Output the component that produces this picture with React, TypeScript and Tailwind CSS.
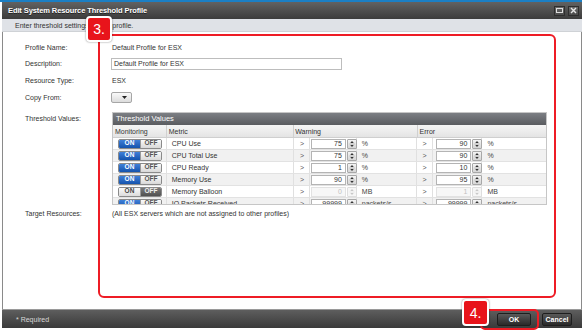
import React from "react";

type Row = {
  metric: string;
  on: boolean;
  w: string;
  e: string;
  unit: string;
};

const rows: Row[] = [
  { metric: "CPU Use", on: true, w: "75", e: "90", unit: "%" },
  { metric: "CPU Total Use", on: true, w: "75", e: "90", unit: "%" },
  { metric: "CPU Ready", on: true, w: "1", e: "10", unit: "%" },
  { metric: "Memory Use", on: true, w: "90", e: "95", unit: "%" },
  { metric: "Memory Balloon", on: false, w: "0", e: "1", unit: "MB" },
  { metric: "IO Packets Received", on: true, w: "99999", e: "99999", unit: "packets/s" },
];

function Spin({ disabled }: { disabled: boolean }) {
  const c = disabled ? "#c8c8c8" : "#333";
  return (
    <div
      className={
        "w-[10px] h-[10px] flex flex-col items-center justify-center border rounded-[1px] " +
        (disabled
          ? "border-[#dedede] bg-[#f6f6f6]"
          : "border-[#a8a8a8] bg-gradient-to-b from-[#f4f4f4] to-[#d6d6d6]")
      }
    >
      <svg width="8" height="9" viewBox="0 0 8 9">
        <path d="M4 1 L6 3.5 L2 3.5 Z" fill={c} />
        <line x1="1" y1="4.5" x2="7" y2="4.5" stroke={disabled ? "#e0e0e0" : "#999"} strokeWidth="0.6" />
        <path d="M4 8 L6 5.5 L2 5.5 Z" fill={c} />
      </svg>
    </div>
  );
}

function NumInput({ v, disabled, w }: { v: string; disabled: boolean; w: string }) {
  return (
    <div className="flex items-center gap-[1px]">
      <div
        className={
          "h-[10px] flex items-center justify-end pr-[3px] border " +
          w +
          (disabled
            ? " border-[#e2e2e2] bg-[#f7f7f7] text-[#c0c0c0]"
            : " border-[#b4b4b4] bg-white text-[#333]")
        }
      >
        {v}
      </div>
      <Spin disabled={disabled} />
    </div>
  );
}

function Toggle({ on }: { on: boolean }) {
  return (
    <div className="flex h-[10px] w-[44px] rounded-[2px] overflow-hidden border border-[#8a8a8a] text-[6.5px] font-bold">
      <div
        className={
          "w-[22px] flex items-center justify-center " +
          (on
            ? "bg-gradient-to-b from-[#3f80d8] to-[#1453ad] text-white"
            : "bg-gradient-to-b from-[#fafafa] to-[#dcdcdc] text-[#444]")
        }
      >
        ON
      </div>
      <div
        className={
          "w-[22px] flex items-center justify-center border-l border-[#9a9a9a] " +
          (on
            ? "bg-gradient-to-b from-[#fafafa] to-[#d8d8d8] text-[#555]"
            : "bg-gradient-to-b from-[#7a7a7a] to-[#505050] text-[#eee]")
        }
      >
        OFF
      </div>
    </div>
  );
}

function TableRow({ r, i }: { r: Row; i: number }) {
  const dis = !r.on;
  const bg = i % 2 === 0 ? "bg-white" : "bg-[#f1f1f1]";
  return (
    <div className={"flex h-[12px] shrink-0 border-b border-[#e2e2e2] " + bg}>
      <div className="w-[54px] flex items-center pl-[5px] border-r border-[#e0e0e0]">
        <Toggle on={r.on} />
      </div>
      <div className="w-[128px] flex items-center pl-[5px] border-r border-[#e0e0e0] text-[#333]">
        {r.metric}
      </div>
      <div className="w-[16px] flex items-center pl-[6px] border-r border-[#e0e0e0] text-[#555]">
        &gt;
      </div>
      <div className="w-[47px] flex items-center pl-[1px] border-r border-[#e0e0e0]">
        <NumInput v={r.w} disabled={dis} w="w-[35px]" />
      </div>
      <div className="w-[61px] flex items-center pl-[5px] border-r border-[#e0e0e0] text-[#444]">
        {r.unit}
      </div>
      <div className="w-[16px] flex items-center pl-[5px] border-r border-[#e0e0e0] text-[#555]">
        &gt;
      </div>
      <div className="w-[49px] flex items-center pl-[3px] border-r border-[#e0e0e0]">
        <NumInput v={r.e} disabled={dis} w="w-[35px]" />
      </div>
      <div className="w-[64px] flex items-center pl-[5px] text-[#444]">{r.unit}</div>
    </div>
  );
}

function Badge({ n, cls }: { n: string; cls: string }) {
  return (
    <div
      className={
        "absolute bg-[#e8141b] border-2 border-white rounded-[4px] shadow-[0_0_2px_rgba(0,0,0,0.5)] flex items-center justify-center text-white text-[14px] leading-none font-['Liberation_Sans',Arial,sans-serif] " +
        cls
      }
    >
      {n}
    </div>
  );
}

export default function App() {
  return (
    <div className="w-[585px] h-[335px] bg-white relative overflow-hidden font-['Liberation_Sans',Arial,sans-serif] text-[7px] leading-none text-[#333]">
      <div className="h-[2px] bg-[#1b7fc4] w-[582px]" />
      <div className="w-[580px] ml-[2px] flex flex-col">
        {/* Title bar */}
        <div className="h-[17px] bg-gradient-to-b from-[#626262] to-[#3c3c3c] flex items-center justify-between pl-[6px] pr-[3px]">
          <span className="text-white font-bold text-[7.5px] tracking-[-0.1px] [text-shadow:0_1px_0_#222]">
            Edit System Resource Threshold Profile
          </span>
          <div className="flex gap-[3px] items-center">
            <div className="w-[11px] h-[10px] bg-gradient-to-b from-[#6a6a6a] to-[#4a4a4a] border border-[#2e2e2e] flex items-center justify-center">
              <div className="w-[7px] h-[5px] border border-[#ddd]" />
            </div>
            <div className="w-[11px] h-[10px] bg-gradient-to-b from-[#6a6a6a] to-[#4a4a4a] border border-[#2e2e2e] flex items-center justify-center">
              <svg width="7" height="7" viewBox="0 0 7 7">
                <path d="M1 1 L6 6 M6 1 L1 6" stroke="#e6e6e6" strokeWidth="1.4" />
              </svg>
            </div>
          </div>
        </div>
        {/* Instruction band */}
        <div className="h-[13px] bg-[#dfe2e7] border-b border-[#cfd2d6] flex items-center pl-[13px] text-[#333]">
          Enter threshold settings for the profile.
        </div>
        {/* Content */}
        <div className="h-[277px] border-l border-r border-[#8a8a8a] bg-white flex flex-col pt-[9px] pl-[22px]">
          <div className="flex h-[13px] items-center">
            <div className="w-[87px]">Profile Name:</div>
            <div>Default Profile for ESX</div>
          </div>
          <div className="flex h-[13px] items-center mt-[3px]">
            <div className="w-[86px]">Description:</div>
            <div className="w-[231px] h-[12px] border border-[#bdbdbd] bg-white flex items-center pl-[2px]">
              Default Profile for ESX
            </div>
          </div>
          <div className="flex h-[12px] items-center mt-[4px]">
            <div className="w-[87px]">Resource Type:</div>
            <div>ESX</div>
          </div>
          <div className="flex h-[12px] items-center mt-[5px]">
            <div className="w-[86px]">Copy From:</div>
            <div className="w-[21px] h-[11px] border border-[#a6a6a6] rounded-[2px] bg-gradient-to-b from-[#fafafa] to-[#dcdcdc] flex items-center justify-end pr-[4px]">
              <svg width="5" height="3" viewBox="0 0 5 3">
                <path d="M0 0 L5 0 L2.5 3 Z" fill="#222" />
              </svg>
            </div>
          </div>
          <div className="flex mt-[9px]">
            <div className="w-[87px] h-[12px] flex items-center">Threshold Values:</div>
            {/* Table panel */}
            <div className="w-[435px] h-[93px] flex flex-col border border-[#c6c6c6] overflow-hidden">
              <div className="h-[12px] shrink-0 bg-gradient-to-b from-[#7c7f84] to-[#5a5c60] text-white flex items-center pl-[3px] text-[7.5px]">
                Threshold Values
              </div>
              <div className="h-[13px] shrink-0 flex bg-gradient-to-b from-[#f5f5f5] to-[#e4e4e4] border-b border-[#cfcfcf] text-[#333]">
                <div className="w-[54px] flex items-center pl-[2px] border-r border-[#d0d0d0]">Monitoring</div>
                <div className="w-[128px] flex items-center pl-[2px] border-r border-[#d0d0d0]">Metric</div>
                <div className="w-[124px] flex items-center pl-[1px] border-r border-[#d0d0d0]">Warning</div>
                <div className="w-[129px] flex items-center pl-[2px]">Error</div>
              </div>
              {rows.map((r, i) => (
                <TableRow key={r.metric} r={r} i={i} />
              ))}
            </div>
          </div>
          <div className="flex h-[12px] items-center mt-[2px]">
            <div className="w-[87px]">Target Resources:</div>
            <div>(All ESX servers which are not assigned to other profiles)</div>
          </div>
        </div>
        {/* Footer */}
        <div className="h-[19px] bg-gradient-to-b from-[#5e5e5e] to-[#3a3a3a] border-t border-[#9a9a9a] flex items-center justify-between pl-[14px] pr-[10px]">
          <span className="text-[#d8d8d8]">* Required</span>
          <div className="flex gap-[11px] items-center">
            <div className="w-[34px] h-[13px] rounded-[2px] border border-[#1e1e1e] bg-gradient-to-b from-[#5a5a5a] to-[#2a2a2a] text-white font-bold flex items-center justify-center">
              OK
            </div>
            <div className="w-[30px] h-[13px] rounded-[2px] border border-[#1e1e1e] bg-gradient-to-b from-[#5a5a5a] to-[#2a2a2a] text-white font-bold flex items-center justify-center">
              Cancel
            </div>
          </div>
        </div>
      </div>

      {/* Annotation overlays */}
      <div className="absolute left-[98px] top-[34px] w-[458px] h-[264px] border-2 border-[#ee1c25] rounded-[6px] pointer-events-none" />
      <Badge n="3." cls="left-[86px] top-[16px] w-[26px] h-[26px]" />
      <div className="absolute left-[480px] top-[309px] w-[59px] h-[21px] border-2 border-[#ee1c25] rounded-[5px] pointer-events-none" />
      <Badge n="4." cls="left-[462px] top-[299px] w-[27px] h-[27px]" />
    </div>
  );
}
